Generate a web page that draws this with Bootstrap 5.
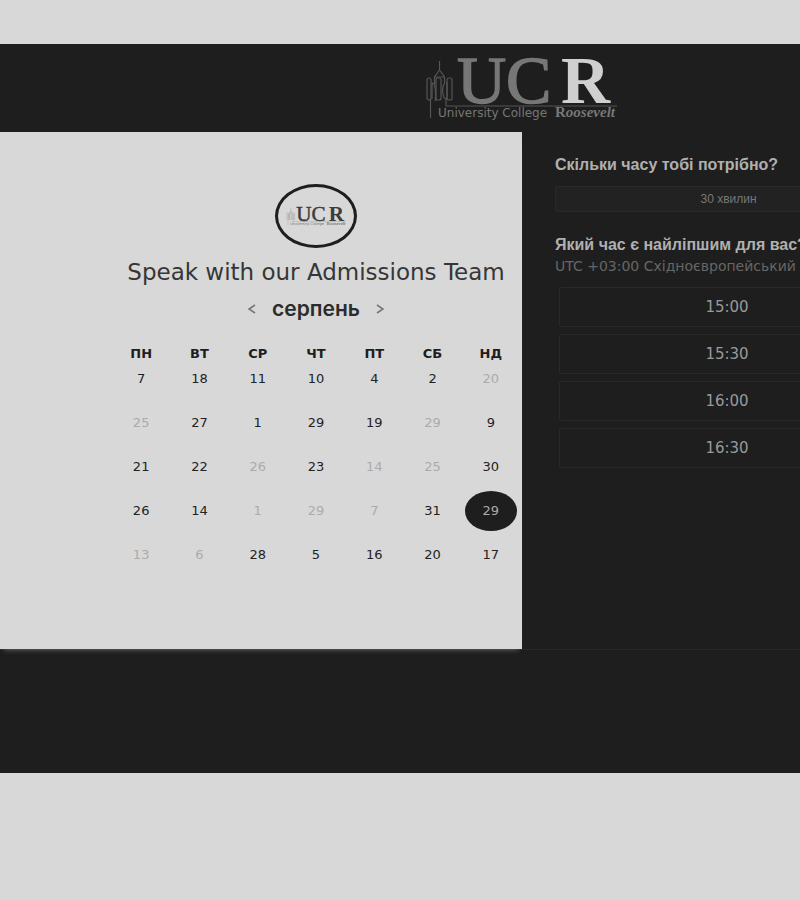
<!DOCTYPE html>
<html lang="uk">
<head>
<meta charset="utf-8">
<meta name="viewport" content="width=device-width, initial-scale=1">
<title>Speak with our Admissions Team</title>
<link href="https://cdn.jsdelivr.net/npm/bootstrap@5.3.0/dist/css/bootstrap.min.css" rel="stylesheet">
<style>
:root { --paper: #d8d8d8; --ink: #1e1e1e; }
body { background: var(--paper); color: var(--ink); font-family: "DejaVu Sans", sans-serif; font-size: 13px; padding-top: 44px; }
.booking { background: var(--ink); padding-bottom: 123px; }
.booking-inner { min-width: 1044px; }
.masthead { height: 88px; padding-top: 10px; }
.masthead svg { width: 196px; height: 68px; --uc: #777; --r: #d0d0d0; --tower: #555; --sub: #777; }
.panes { border-bottom: 1px solid #2a2a2a; }
.date-pane { background: var(--paper); min-height: 517px; padding-top: 52px; box-shadow: 0 5px 5px -4px #5a605d; }
.calendar { width: 412px; padding: 0 2px; }
.avatar { width: 82px; height: 64px; border: 3px solid var(--ink); border-radius: 50%; }
.avatar svg { width: 61px; height: 22px; --uc: #3c3c3c; --r: #3c3c3c; --tower: #999; --sub: #777; }
.title { font-family: "DejaVu Sans", sans-serif; font-size: 23px; line-height: 28px; color: #363636; margin: 10px 0 11px; }
.month { font-family: "Inter", sans-serif; font-size: 21px; line-height: 24px; font-weight: 600; color: #2c2c2c; }
.step { width: 16px; height: 24px; color: #777; }
.days { margin-top: 24px; table-layout: fixed; }
.days th { font-family: "DejaVu Sans", sans-serif; font-size: 13px; line-height: 18px; padding: 0 0 5px; }
.days td { height: 44px; padding: 0; vertical-align: top; }
.day { font-size: 13px; line-height: 20px; color: #222; width: 52px; }
.day:disabled { color: #ababab; }
.day.chosen { height: 40px; margin: -10px 0; border-radius: 50%; background: var(--ink); color: #aaa; }
.time-pane { padding: 23px 142px 0 33px; color: #b0b0b0; }
.question { font-family: "Liberation Sans", sans-serif; font-size: 16px; line-height: 20px; font-weight: 700; }
.length { font-family: "Liberation Sans", sans-serif; font-size: 12px; line-height: 24px; color: #777; background: #222; border: 1px solid #292929; border-radius: 2px; margin: 11px 0 23px; }
.zone { font-size: 14px; line-height: 20px; color: #666; margin: 1px 0 11px; }
.slots { gap: 7px; padding: 0 7px 0 4px; }
.slot { font-size: 15px; line-height: 38px; color: #999; border: 1px solid #292929; border-radius: 2px; }
</style>
<script src="https://cdn.jsdelivr.net/npm/bootstrap@5.3.0/dist/js/bootstrap.bundle.min.js"></script>
</head>
<body>
<svg class="d-none" aria-hidden="true">
  <symbol id="ucr" viewBox="0 0 196 68">
    <g fill="none" stroke="var(--tower)" stroke-width="1.2">
      <path d="M15.500 7v9M15.500 16l-5 7v7M15.500 16l5 7v7M10.500 23h10M8 28v17M23 28v17"/>
      <rect x="3" y="24" width="4" height="22" rx="2"/><rect x="12" y="24" width="5" height="22" rx="2"/><rect x="23" y="24" width="5" height="22" rx="2"/>
      <path d="M8 30c4-3 4 14 3 17M20 30c-2 4-2 11 1 15M6.500 46v18M22 44v8h171"/>
    </g>
    <g font-family="Liberation Serif, serif">
      <g fill="var(--uc)" stroke="var(--uc)" stroke-width="1.5"><text x="33" y="49" font-size="68">U</text><text x="82" y="49" font-size="68">C</text></g>
      <text x="137" y="49" font-size="68" font-weight="700" fill="var(--r)">R</text>
      <text x="131" y="63" font-size="15" font-weight="700" fill="var(--sub)">R<tspan font-style="italic">oosevelt</tspan></text>
    </g>
    <text x="14" y="63" font-family="DejaVu Sans, sans-serif" font-size="12" fill="var(--sub)">University College</text>
  </symbol>
</svg>
<main class="booking overflow-hidden">
  <div class="booking-inner">
    <header class="masthead d-flex justify-content-center align-items-start">
      <svg role="img" aria-label="University College Roosevelt"><use href="#ucr"/></svg>
    </header>
    <div class="panes row g-0">
      <section class="date-pane col-6 d-flex justify-content-end align-items-start">
        <div class="calendar text-center">
          <div class="avatar d-flex align-items-center justify-content-center mx-auto"><svg aria-hidden="true"><use href="#ucr"/></svg></div>
          <h1 class="title fw-normal text-nowrap">Speak with our Admissions Team</h1>
          <div class="d-flex justify-content-center align-items-center gap-2">
            <button class="step btn p-0 border-0 d-flex align-items-center" type="button" aria-label="Попередній місяць"><svg width="8" height="10" viewBox="0 0 8 10" fill="none" stroke="currentColor" stroke-width="1.600"><path d="M7 1 1 5l6 4"/></svg></button>
            <h2 class="month m-0">серпень</h2>
            <button class="step btn p-0 border-0 d-flex align-items-center justify-content-end" type="button" aria-label="Наступний місяць"><svg width="8" height="10" viewBox="0 0 8 10" fill="none" stroke="currentColor" stroke-width="1.600"><path d="m1 1 6 4-6 4"/></svg></button>
          </div>
          <table class="days w-100">
            <thead><tr><th>ПН</th><th>ВТ</th><th>СР</th><th>ЧТ</th><th>ПТ</th><th>СБ</th><th>НД</th></tr></thead>
            <tbody>
              <tr><td><button class="day btn p-0 border-0">7</button></td><td><button class="day btn p-0 border-0">18</button></td><td><button class="day btn p-0 border-0">11</button></td><td><button class="day btn p-0 border-0">10</button></td><td><button class="day btn p-0 border-0">4</button></td><td><button class="day btn p-0 border-0">2</button></td><td><button class="day btn p-0 border-0 opacity-100" disabled>20</button></td></tr>
              <tr><td><button class="day btn p-0 border-0 opacity-100" disabled>25</button></td><td><button class="day btn p-0 border-0">27</button></td><td><button class="day btn p-0 border-0">1</button></td><td><button class="day btn p-0 border-0">29</button></td><td><button class="day btn p-0 border-0">19</button></td><td><button class="day btn p-0 border-0 opacity-100" disabled>29</button></td><td><button class="day btn p-0 border-0">9</button></td></tr>
              <tr><td><button class="day btn p-0 border-0">21</button></td><td><button class="day btn p-0 border-0">22</button></td><td><button class="day btn p-0 border-0 opacity-100" disabled>26</button></td><td><button class="day btn p-0 border-0">23</button></td><td><button class="day btn p-0 border-0 opacity-100" disabled>14</button></td><td><button class="day btn p-0 border-0 opacity-100" disabled>25</button></td><td><button class="day btn p-0 border-0">30</button></td></tr>
              <tr><td><button class="day btn p-0 border-0">26</button></td><td><button class="day btn p-0 border-0">14</button></td><td><button class="day btn p-0 border-0 opacity-100" disabled>1</button></td><td><button class="day btn p-0 border-0 opacity-100" disabled>29</button></td><td><button class="day btn p-0 border-0 opacity-100" disabled>7</button></td><td><button class="day btn p-0 border-0">31</button></td><td><button class="day chosen btn p-0 border-0" aria-pressed="true">29</button></td></tr>
              <tr><td><button class="day btn p-0 border-0 opacity-100" disabled>13</button></td><td><button class="day btn p-0 border-0 opacity-100" disabled>6</button></td><td><button class="day btn p-0 border-0">28</button></td><td><button class="day btn p-0 border-0">5</button></td><td><button class="day btn p-0 border-0">16</button></td><td><button class="day btn p-0 border-0">20</button></td><td><button class="day btn p-0 border-0">17</button></td></tr>
            </tbody>
          </table>
        </div>
      </section>
      <section class="time-pane col-6">
        <h2 class="question m-0">Скільки часу тобі потрібно?</h2>
        <button class="length btn d-block w-100 p-0" type="button">30 хвилин</button>
        <h2 class="question m-0">Який час є найліпшим для вас?</h2>
        <p class="zone text-nowrap">UTC +03:00 Східноєвропейський час</p>
        <div class="slots d-grid">
          <button class="slot btn p-0" type="button">15:00</button>
          <button class="slot btn p-0" type="button">15:30</button>
          <button class="slot btn p-0" type="button">16:00</button>
          <button class="slot btn p-0" type="button">16:30</button>
        </div>
      </section>
    </div>
  </div>
</main>
</body>
</html>
